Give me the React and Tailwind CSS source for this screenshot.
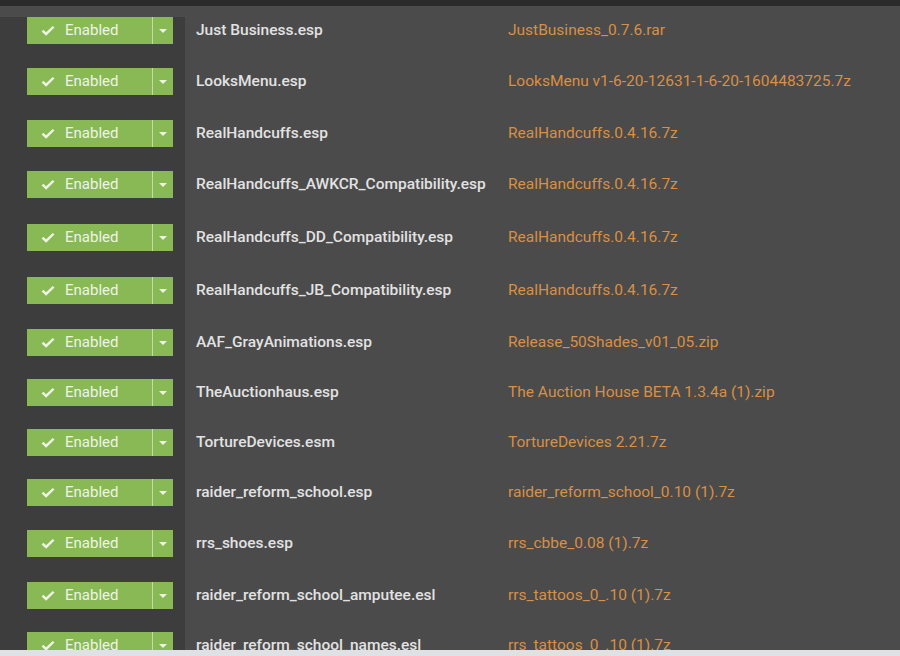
import React from 'react';

const mods = [
    { name: 'Just Business.esp', file: 'JustBusiness_0.7.6.rar', h: 'h-[62px] pt-[11px]' },
    { name: 'LooksMenu.esp', file: 'LooksMenu v1-6-20-12631-1-6-20-1604483725.7z', h: 'h-[52px]' },
    { name: 'RealHandcuffs.esp', file: 'RealHandcuffs.0.4.16.7z', h: 'h-[51px]' },
    { name: 'RealHandcuffs_AWKCR_Compatibility.esp', file: 'RealHandcuffs.0.4.16.7z', h: 'h-[53px]' },
    { name: 'RealHandcuffs_DD_Compatibility.esp', file: 'RealHandcuffs.0.4.16.7z', h: 'h-[53px]' },
    { name: 'RealHandcuffs_JB_Compatibility.esp', file: 'RealHandcuffs.0.4.16.7z', h: 'h-[52px]' },
    { name: 'AAF_GrayAnimations.esp', file: 'Release_50Shades_v01_05.zip', h: 'h-[50px]' },
    { name: 'TheAuctionhaus.esp', file: 'The Auction House BETA 1.3.4a (1).zip', h: 'h-[50px]' },
    { name: 'TortureDevices.esm', file: 'TortureDevices 2.21.7z', h: 'h-[50px]' },
    { name: 'raider_reform_school.esp', file: 'raider_reform_school_0.10 (1).7z', h: 'h-[51px]' },
    { name: 'rrs_shoes.esp', file: 'rrs_cbbe_0.08 (1).7z', h: 'h-[52px]' },
    { name: 'raider_reform_school_amputee.esl', file: 'rrs_tattoos_0_.10 (1).7z', h: 'h-[50px]' },
    { name: 'raider_reform_school_names.esl', file: 'rrs_tattoos_0_.10 (1).7z', h: 'h-[52px]' },
];

const Check = () => (
    <svg width="14" height="12" viewBox="0 0 14 12" className="shrink-0">
        <path d="M0.6 6.4 L2.4 4.7 L5.1 7.3 L11.7 0.9 L13.5 2.6 L5.1 10.8 Z" fill="#eef3e6" />
    </svg>
);

const StatusButton = () => (
    <div className="flex h-[27px] w-[146px] items-stretch bg-[#88b954] text-[#eef3e6]">
        <div className="flex flex-1 items-center gap-[10px] pl-[14px]">
            <Check />
            <span className="text-[15px] leading-[27px]">Enabled</span>
        </div>
        <div className="w-px bg-[#c4dca8]" />
        <div className="flex w-[20px] items-center justify-center">
            <svg width="8" height="4" viewBox="0 0 8 4">
                <path d="M0 0 L8 0 L4 4 Z" fill="#eef3e6" />
            </svg>
        </div>
    </div>
);

export default function App() {
    return (
        <div className="flex h-[656px] w-[900px] flex-col overflow-hidden bg-[#4b4b4b] font-['Roboto',sans-serif]">
            <div className="h-[6px] shrink-0 bg-[#2b2b2b]" />
            <div className="flex-1 overflow-hidden">
                {mods.map((m, i) => (
                    <div key={i} className={`flex ${m.h}`}>
                        <div className="w-[185px] shrink-0 bg-[#3d3d3d] pl-[27px]">
                            <StatusButton />
                        </div>
                        <div className="flex h-[27px] flex-1 items-center">
                            <div className="w-[323px] pl-[11px] text-[15.5px] font-medium text-[#e2e2e2]">{m.name}</div>
                            <div className="text-[15.5px] text-[#d98f44]">{m.file}</div>
                        </div>
                    </div>
                ))}
            </div>
            <div className="h-[6px] shrink-0 bg-[#dfe1e4]" />
        </div>
    );
}
